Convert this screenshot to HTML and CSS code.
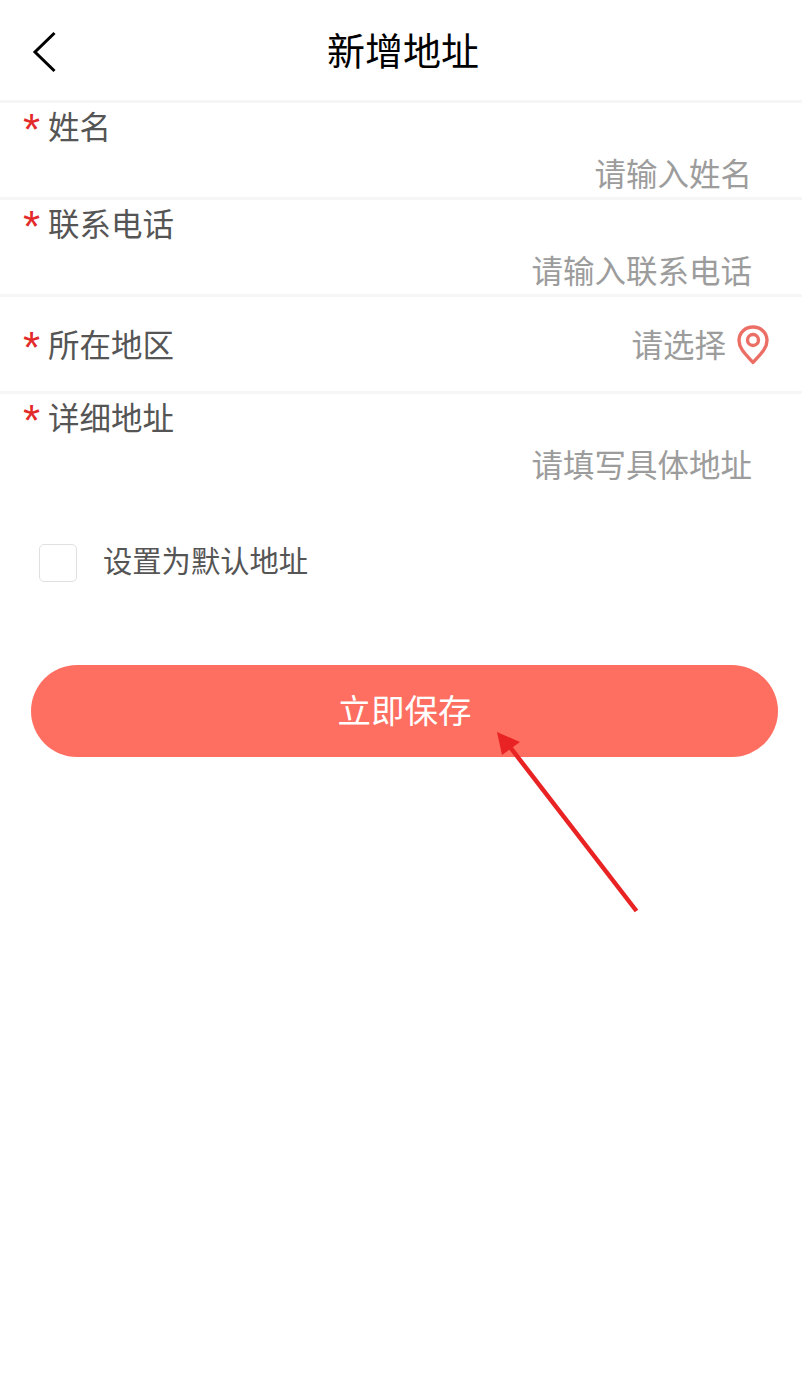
FILE: index.html
```html
<!DOCTYPE html>
<html lang="zh-CN">
<head>
    <meta charset="UTF-8">
    <meta name="viewport" content="width=device-width, initial-scale=1.0">
    <title>新增地址</title>
    <link rel="stylesheet" href="styles.css">
</head>
<body>
    <header class="top-bar">
        <svg class="back" width="26" height="42" viewBox="0 0 26 42">
            <path d="M22.500 2 L3 21 L22.500 40" fill="none" stroke="#000" stroke-width="3"/>
        </svg>
        <h1>新增地址</h1>
    </header>
    <main>
        <div class="field">
            <div class="field-label"><span class="star">*</span>姓名</div>
            <div class="field-value">请输入姓名</div>
        </div>
        <div class="field">
            <div class="field-label"><span class="star">*</span>联系电话</div>
            <div class="field-value">请输入联系电话</div>
        </div>
        <div class="field field-inline">
            <div class="field-label"><span class="star">*</span>所在地区</div>
            <div class="field-value">
                请选择
                <svg class="pin" width="34" height="40" viewBox="0 0 34 40">
                    <path d="M17 37.500 C11 30.500 3 24 3 15.500 C3 7.500 9.500 2 17 2 C24.500 2 31 7.500 31 15.500 C31 24 23 30.500 17 37.500 Z" fill="none" stroke="#ec6f66" stroke-width="3.400" stroke-linejoin="round"/>
                    <circle cx="17" cy="15" r="5.500" fill="none" stroke="#ec6f66" stroke-width="3.400"/>
                </svg>
            </div>
        </div>
        <div class="field field-last">
            <div class="field-label"><span class="star">*</span>详细地址</div>
            <div class="field-value">请填写具体地址</div>
        </div>
        <label class="default-row">
            <span class="checkbox"></span>
            设置为默认地址
        </label>
        <button class="save">立即保存</button>
    </main>
    <!-- red annotation arrow drawn over the page -->
    <svg class="arrow" width="802" height="1375" viewBox="0 0 802 1375">
        <line x1="636.500" y1="911" x2="510" y2="747" stroke="#e92323" stroke-width="4.500"/>
        <polygon points="497,732 520,742 502,755" fill="#e92323"/>
    </svg>
</body>
</html>
```
FILE: styles.css
```css
* {
    margin: 0;
    padding: 0;
    box-sizing: border-box;
    font-family: "Liberation Sans", "Noto Sans CJK SC", sans-serif;
}
body {
    background-color: #fff;
    position: relative;
    height: 1375px;
    overflow: hidden;
}
.top-bar {
    height: 103px;
    border-bottom: 3px solid #f6f6f6;
    padding-bottom: 4px;
    display: flex;
    justify-content: center;
    align-items: center;
    position: relative;
}
.top-bar h1 {
    font-size: 38px;
    font-weight: normal;
    color: #000;
    margin-left: 4px;
}
.back {
    position: absolute;
    left: 32px;
    top: 31px;
}
.field {
    height: 97px;
    border-bottom: 3px solid #f6f6f6;
    padding: 0 50px 0 24px;
}
.field-label {
    font-size: 31.500px;
    line-height: 50px;
    color: #555;
    display: flex;
}
.star {
    color: #e32a2a;
    width: 24px;
    height: 50px;
    font-size: 44px;
    line-height: 54px;
    margin-left: -1px;
    margin-right: 1px;
}
.field-value {
    font-size: 31.500px;
    line-height: 44px;
    color: #9c9c9c;
    text-align: right;
}
.field-inline {
    display: flex;
    justify-content: space-between;
    align-items: center;
    padding-top: 4px;
    padding-right: 32px;
}
.field-inline .field-value {
    display: flex;
    align-items: center;
    gap: 10px;
}
.pin {
    margin-top: -2px;
}
.field-last {
    height: 94px;
    border-bottom: none;
}
.default-row {
    display: flex;
    align-items: center;
    gap: 26px;
    margin: 48px 0 0 39px;
    font-size: 29.300px;
    color: #555;
}
.checkbox {
    width: 38px;
    height: 38px;
    margin-top: 8px;
    border: 1.500px solid #e0e0e0;
    border-radius: 5px;
}
.save {
    display: block;
    width: 747px;
    height: 92px;
    margin: 83px 0 0 31px;
    padding-bottom: 6px;
    border: none;
    border-radius: 46px;
    background: #ff6f61;
    color: #fff;
    font-size: 33.500px;
}
.arrow {
    position: absolute;
    left: 0;
    top: 0;
    pointer-events: none;
}
```
